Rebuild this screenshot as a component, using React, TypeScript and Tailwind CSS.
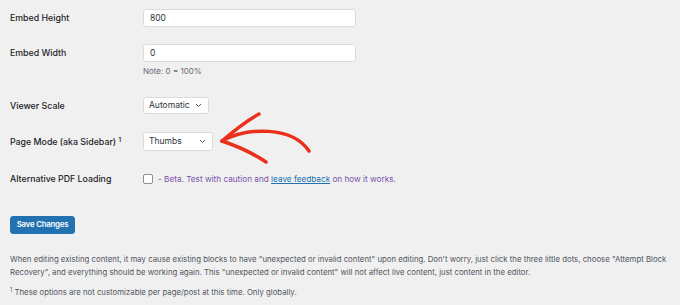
import type { ReactNode } from 'react'

function Row({ label, children, className = '' }: { label: ReactNode; children: ReactNode; className?: string }) {
  return (
    <div className={`flex items-center ${className}`}>
      <div className="w-[133px] shrink-0 text-[8.8px] font-medium text-[#1d2327]">{label}</div>
      {children}
    </div>
  )
}

function Chevron() {
  return (
    <svg width="7" height="5" viewBox="0 0 7 5" className="shrink-0">
      <polyline points="1,1 3.5,3.5 6,1" fill="none" stroke="#50575e" strokeWidth="1" />
    </svg>
  )
}

function Select({ value, width, height }: { value: string; width: string; height: string }) {
  return (
    <div
      className={`flex items-center justify-between ${width} ${height} pl-[5px] pr-[6px] bg-white border border-[#dcdcde] rounded-[3px] text-[8.5px] text-[#2c3338]`}
    >
      <span>{value}</span>
      <Chevron />
    </div>
  )
}

export default function App() {
  return (
    <div className="relative w-[680px] h-[305px] overflow-hidden bg-[#f0f0f1] font-['Inter','Liberation_Sans',sans-serif]">
      <div className="flex flex-col pl-[10px] pt-[9px]">
        <Row label="Embed Height">
          <div className="w-[213px] h-[18px] flex items-center pl-[6px] bg-white border border-[#dcdcde] rounded-[3px] text-[8.5px] text-[#2c3338]">
            800
          </div>
        </Row>
        <Row label="Embed Width" className="mt-[17px]">
          <div className="w-[213px] h-[18px] flex items-center pl-[6px] bg-white border border-[#dcdcde] rounded-[3px] text-[8.5px] text-[#2c3338]">
            0
          </div>
        </Row>
        <div className="mt-[4px] pl-[133px] leading-[10px] text-[8px] text-[#646970]">Note: 0 = 100%</div>

        <Row label="Viewer Scale" className="mt-[21px]">
          <Select value="Automatic" width="w-[66px]" height="h-[17px]" />
        </Row>
        <Row
          label={
            <span>
              Page Mode (aka Sidebar) <sup className="text-[6px] font-semibold">1</sup>
            </span>
          }
          className="mt-[18px]"
        >
          <Select value="Thumbs" width="w-[70px]" height="h-[19px]" />
        </Row>
        <Row label="Alternative PDF Loading" className="mt-[22px] h-[12px]">
          <div className="w-[10px] h-[10px] bg-white border border-[#8c8f94] rounded-[2px]" />
          <span className="ml-[5px] text-[8.2px] text-[#7b52ab]">
            - Beta. Test with caution and{' '}
            <span className="text-[#2271b1] underline">leave feedback</span> on how it works.
          </span>
        </Row>

        <div className="mt-[24px]">
          <button className="w-[65px] h-[18px] bg-[#2271b1] border border-[#2271b1] rounded-[3px] text-white text-[7.8px] font-semibold tracking-[-0.2px]">
            Save Changes
          </button>
        </div>

        <p className="mt-[19px] w-[665px] leading-[13px] text-[7.8px] text-[#50575e]">
          When editing existing content, it may cause existing blocks to have "unexpected or invalid content" upon
          editing. Don't worry, just click the three little dots, choose "Attempt Block Recovery", and everything
          should be working again. This "unexpected or invalid content" will not affect live content, just content in
          the editor.
        </p>
        <p className="mt-[7px] leading-[13px] text-[7.8px] text-[#50575e]">
          <sup className="text-[5.5px]">1</sup> These options are not customizable per page/post at this time. Only
          globally.
        </p>
      </div>

      <svg className="absolute inset-0 pointer-events-none" width="680" height="305" viewBox="0 0 680 305">
        <g fill="none" stroke="#ea2f1c" strokeLinecap="round" strokeLinejoin="round">
          <path d="M222 141 C248 127, 292 126, 309 151" strokeWidth="3.5" />
          <path d="M222 141 C236 129, 248 120, 259 114" strokeWidth="3.5" />
          <path d="M222 141 C240 147, 254 154, 266 162" strokeWidth="3.5" />
        </g>
      </svg>
    </div>
  )
}
